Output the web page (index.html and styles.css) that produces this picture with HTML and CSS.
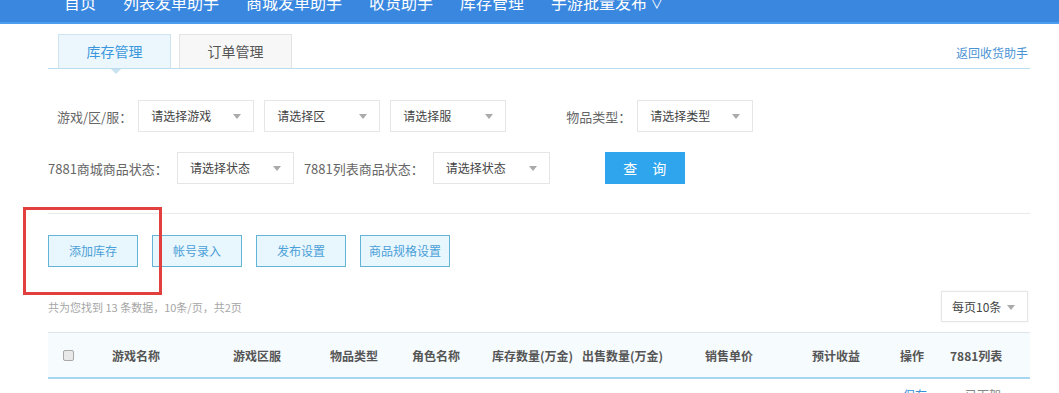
FILE: index.html
```html
<!DOCTYPE html>
<html lang="zh-CN">
<head>
    <meta charset="UTF-8">
    <title>库存管理</title>
    <link rel="stylesheet" href="styles.css">
</head>
<body>
<div id="nav">
    <ul class="navlist">
        <li>首页</li>
        <li>列表发单助手</li>
        <li>商城发单助手</li>
        <li>收货助手</li>
        <li>库存管理</li>
        <li>手游批量发布 <span class="navarrow">∨</span></li>
    </ul>
</div>
<div id="container">
    <div class="tabbar">
        <div class="tab tabon">库存管理<span class="tabtip"></span></div>
        <div class="tab">订单管理</div>
        <a class="backlink">返回收货助手</a>
    </div>

    <div class="searchrow rowone">
        <span class="label labelfirst">游戏/区/服：</span>
        <div class="sel">请选择游戏<i class="arrow"></i></div>
        <div class="sel">请选择区<i class="arrow"></i></div>
        <div class="sel">请选择服<i class="arrow"></i></div>
        <span class="label labeltype">物品类型：</span>
        <div class="sel">请选择类型<i class="arrow"></i></div>
    </div>
    <div class="searchrow rowtwo">
        <span class="label">7881商城商品状态：</span>
        <div class="sel">请选择状态<i class="arrow"></i></div>
        <span class="label">7881列表商品状态：</span>
        <div class="sel">请选择状态<i class="arrow"></i></div>
        <div class="querybtn">查 询</div>
    </div>

    <div class="divider"></div>

    <div class="btnrow">
        <div class="lightbtn">添加库存</div>
        <div class="lightbtn">帐号录入</div>
        <div class="lightbtn">发布设置</div>
        <div class="lightbtn">商品规格设置</div>
    </div>

    <div class="inforow">
        <span class="infotext">共为您找到 13 条数据，10条/页，共2页</span>
        <div class="sel pagesel">每页10条<i class="arrow"></i></div>
    </div>

    <div class="tablehead">
        <div class="cell c0"><span class="checkbox"></span></div>
        <div class="cell c1">游戏名称</div>
        <div class="cell c2">游戏区服</div>
        <div class="cell c3">物品类型</div>
        <div class="cell c4">角色名称</div>
        <div class="cell c5">库存数量(万金)</div>
        <div class="cell c6">出售数量(万金)</div>
        <div class="cell c7">销售单价</div>
        <div class="cell c8">预计收益</div>
        <div class="cell c9">操作</div>
        <div class="cell c10">7881列表</div>
    </div>
    <div class="tablerow">
        <div class="cell rowop">保存</div>
        <div class="cell rowstate">已下架</div>
    </div>
</div>
<div class="redmark"></div>
</body>
</html>
```

FILE: styles.css
```css
body {
    margin: 0;
    font-family: "Noto Sans CJK SC", "Liberation Sans", sans-serif;
    font-size: 12px;
    color: #666666;
    background-color: #ffffff;
}

#nav {
    height: 22px;
    overflow: hidden;
    background-color: #3a87e0;
    border-bottom: 2px solid #4d9ef0;
}
.navlist {
    display: flex;
    gap: 27px;
    margin: -14px 0 0 0;
    padding: 0 0 0 64px;
    list-style: none;
}
.navlist li {
    line-height: 32px;
    font-size: 16px;
    color: #ffffff;
}
.navarrow {
    font-size: 12px;
}

#container {
    width: 982px;
    margin-left: 48px;
}

.tabbar {
    display: flex;
    align-items: flex-end;
    height: 34px;
    margin-top: 10px;
    border-bottom: 1px solid #b9dcef;
}
.tab {
    position: relative;
    width: 111px;
    height: 33px;
    line-height: 33px;
    margin-left: 10px;
    margin-bottom: -1px;
    text-align: center;
    font-size: 14px;
    color: #555555;
    background-color: #f7f7f7;
    border: 1px solid #e3e3e3;
    border-bottom: 1px solid #b9dcef;
}
.tabon {
    color: #3b97dd;
    background-color: #ecf7fd;
    border-color: #cfe3ee;
    border-bottom-color: #b9dcef;
}
.tab + .tab {
    margin-left: 8px;
}
.tabtip {
    position: absolute;
    left: 52px;
    bottom: -6px;
    width: 0;
    height: 0;
    border-left: 5px solid transparent;
    border-right: 5px solid transparent;
    border-top: 5px solid #c9e2f0;
}
.backlink {
    margin-left: auto;
    margin-right: 2px;
    align-self: center;
    margin-top: 3px;
    font-size: 12px;
    color: #4a93d4;
}

.searchrow {
    display: flex;
    align-items: center;
    height: 32px;
}
.rowone {
    margin-top: 31px;
}
.rowtwo {
    margin-top: 20px;
}
.label {
    font-size: 13px;
    color: #666666;
    margin-right: 9px;
}
.labelfirst {
    margin-left: 9px;
    margin-right: 6px;
}
.labeltype {
    margin-left: 50px;
    margin-right: 6px;
}
.sel {
    position: relative;
    box-sizing: border-box;
    width: 116px;
    height: 32px;
    line-height: 30px;
    padding-left: 12px;
    font-size: 12px;
    color: #444444;
    border: 1px solid #e6e6e6;
    background-color: #ffffff;
    margin-right: 10px;
}
.rowtwo .sel {
    width: 117px;
}
.arrow {
    position: absolute;
    right: 12px;
    top: 13px;
    width: 0;
    height: 0;
    border-left: 4px solid transparent;
    border-right: 4px solid transparent;
    border-top: 5px solid #aaaaaa;
}
.querybtn {
    width: 80px;
    height: 32px;
    line-height: 32px;
    margin-left: 45px;
    text-align: center;
    font-size: 14px;
    letter-spacing: 6px;
    text-indent: 6px;
    color: #ffffff;
    background-color: #2fa5ee;
}

.divider {
    height: 1px;
    margin-top: 29px;
    background-color: #e9e9e9;
}

.btnrow {
    display: flex;
    gap: 14px;
    margin-top: 21px;
}
.lightbtn {
    box-sizing: border-box;
    width: 90px;
    height: 32px;
    line-height: 30px;
    text-align: center;
    font-size: 12px;
    color: #4aa0d8;
    background-color: #e8f6fd;
    border: 1px solid #64b4d8;
}

.inforow {
    display: flex;
    align-items: center;
    justify-content: space-between;
    height: 31px;
    margin-top: 24px;
}
.infotext {
    font-size: 11px;
    color: #a6a6a6;
}
.pagesel {
    width: 87px;
    height: 31px;
    margin-right: 2px;
    padding-left: 10px;
    box-shadow: 0 0 2px #eeeeee;
}

.tablehead {
    display: flex;
    align-items: center;
    height: 44px;
    margin-top: 10px;
    background-color: #f6fbfe;
    border-top: 1px solid #dde5ea;
    border-bottom: 2px solid #a8d5f0;
}
.cell {
    flex: none;
    font-size: 12px;
    font-weight: bold;
    color: #555555;
}
.c0 { width: 64px; padding-left: 15px; box-sizing: border-box; }
.c1 { width: 121px; }
.c2 { width: 97px; }
.c3 { width: 82px; }
.c4 { width: 80px; }
.c5 { width: 90px; }
.c6 { width: 123px; }
.c7 { width: 107px; }
.c8 { width: 88px; }
.c9 { width: 50px; }
.c10 { width: 80px; }
.checkbox {
    display: block;
    box-sizing: border-box;
    width: 11px;
    height: 11px;
    border: 1px solid #a8a8a8;
    border-radius: 2px;
    background-color: #e9e9e9;
}

.tablerow {
    display: flex;
    height: 20px;
    padding-left: 855px;
    padding-top: 7px;
}
.rowop {
    width: 62px;
    font-weight: normal;
    color: #3b8fd6;
}
.rowstate {
    font-weight: normal;
    color: #888888;
}

.redmark {
    position: absolute;
    left: 23px;
    top: 207px;
    width: 133px;
    height: 82px;
    border: 3px solid #e2403f;
}
```
